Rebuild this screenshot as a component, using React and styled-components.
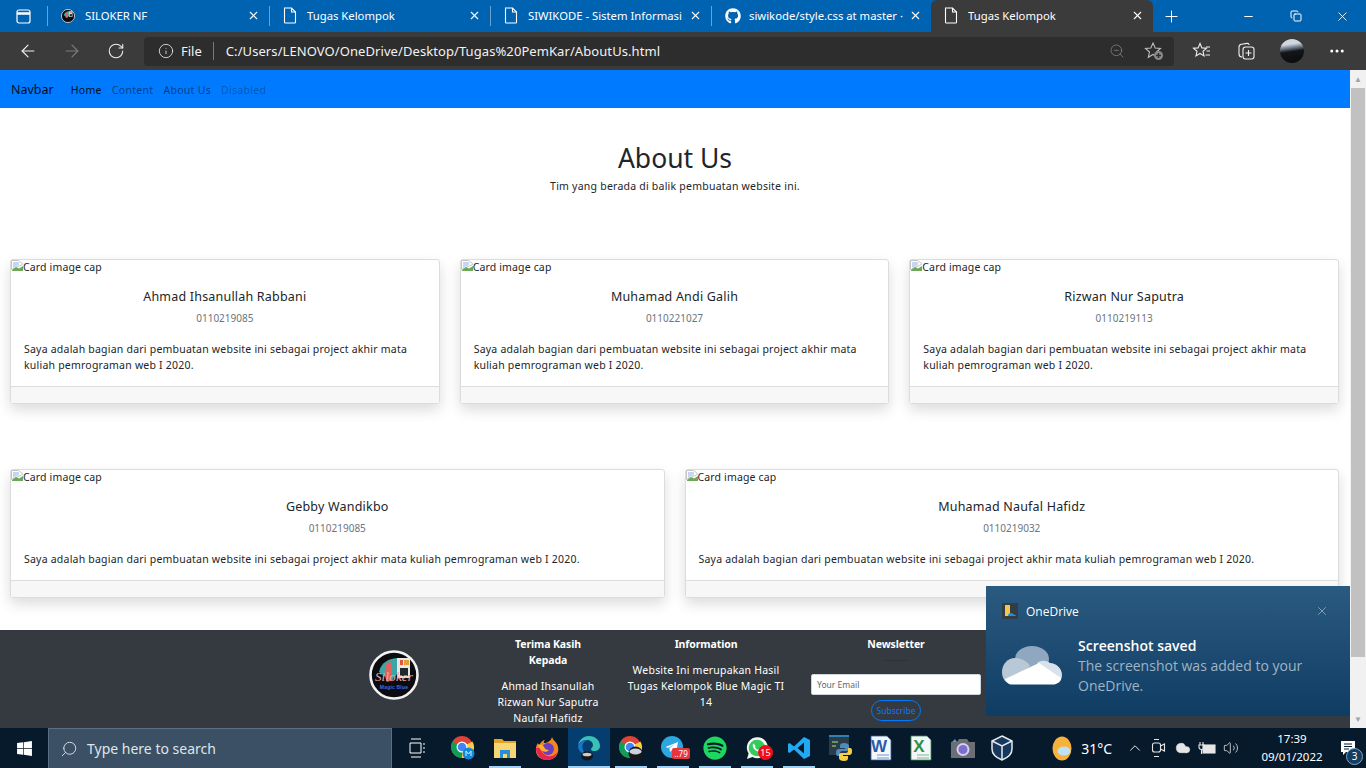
import React from "react";
import styled, { createGlobalStyle } from "styled-components";
import {
  ArrowLeft,
  ArrowRight,
  RotateCw,
  Info,
  ZoomOut,
  Plus,
  Minus,
  X,
  Copy,
  MoreHorizontal,
  Search,
  ChevronUp,
  Volume2,
  Cloud,
} from "lucide-react";
import { FaGithub, FaWindows, FaSpotify } from "react-icons/fa";

const GlobalStyle = createGlobalStyle`
  html, body { margin: 0; padding: 0; height: 100%; overflow: hidden; }
  body { font-family: "Noto Sans", "Open Sans", sans-serif; }
  * { box-sizing: border-box; }
`;

const Screen = styled.div`
  width: 1366px;
  height: 768px;
  display: flex;
  flex-direction: column;
  position: relative;
  overflow: hidden;
  background: #fff;
`;

/* browser chrome */
const TabStrip = styled.div`
  height: 32px;
  background: #0063b1;
  display: flex;
  align-items: stretch;
  color: #fff;
`;
const StripButton = styled.div`
  width: 47px;
  display: flex;
  align-items: center;
  justify-content: center;
`;
const Tab = styled.div`
  width: ${(p) => p.$w}px;
  display: flex;
  align-items: center;
  padding: 0 9px 1px 13px;
  gap: 10px;
  font-size: 11.3px;
  background: ${(p) => (p.$active ? "#3b3b3b" : "transparent")};
  border-radius: ${(p) => (p.$active ? "6px 6px 0 0" : "0")};
  border-left: ${(p) => (p.$active ? "none" : "1px solid #6aa3d2")};
  margin: ${(p) => (p.$active ? "0" : "6px 0")};
`;
const TabTitle = styled.span`
  flex: 1;
  white-space: nowrap;
  overflow: hidden;
`;
const TabClose = styled.span`
  display: flex;
  margin-left: -6px;
`;
const GithubMark = styled(FaGithub)`
  margin-right: -2px;
`;
const NewTab = styled.div`
  width: 36px;
  display: flex;
  align-items: center;
  justify-content: center;
`;
const WindowButtons = styled.div`
  margin-left: auto;
  display: flex;
`;
const WindowButton = styled.div`
  width: 47px;
  display: flex;
  align-items: center;
  justify-content: center;
`;
const Toolbar = styled.div`
  height: 38px;
  background: #3b3b3b;
  display: flex;
  align-items: center;
  padding-left: 6px;
  color: #fff;
`;
const NavButton = styled.div`
  width: 44px;
  display: flex;
  justify-content: center;
  color: ${(p) => (p.$off ? "#7c7c7c" : "#f0f0f0")};
`;
const AddressBar = styled.div`
  width: 1030px;
  height: 29px;
  margin-left: 6px;
  background: #2d2d2d;
  border-radius: 4px;
  display: flex;
  align-items: center;
  padding: 0 10px 0 14px;
  font-size: 13px;
  color: #f2f2f2;
`;
const FileLabel = styled.span`
  margin-left: 7px;
  padding-right: 11px;
  border-right: 1px solid #7a7a7a;
  line-height: 18px;
`;
const Url = styled.span`
  margin-left: 12px;
  flex: 1;
  white-space: nowrap;
  letter-spacing: 0.08px;
`;
const ToolIcons = styled.div`
  display: flex;
  align-items: center;
  margin-left: ${(p) => p.$left}px;
  gap: 24px;
`;
const Avatar = styled.div`
  width: 24px;
  height: 24px;
  border-radius: 50%;
  background: linear-gradient(172deg, #cfd6de 0 24%, #7b8794 36%, #14161b 52%, #0a0a0c 100%);
`;

/* page */
const Viewport = styled.div`
  flex: 1;
  min-height: 0;
  display: flex;
`;
const Page = styled.div`
  flex: 1;
  min-width: 0;
  overflow: hidden;
  color: #212529;
`;
const Scrollbar = styled.div`
  width: 16px;
  background: #f1f1f1;
  display: flex;
  flex-direction: column;
  align-items: center;
  color: #a3a3a3;
  font-size: 8px;
`;
const ScrollArrow = styled.div`
  height: 18px;
  line-height: 18px;
`;
const ScrollThumb = styled.div`
  width: 14px;
  height: 569px;
  background: #c1c1c1;
`;
const ScrollSpace = styled.div`
  flex: 1;
`;
const Navbar = styled.nav`
  height: 38px;
  background: #007bff;
  display: flex;
  align-items: center;
  padding: 1px 11px 0;
`;
const Brand = styled.span`
  font-size: 12.5px;
  color: rgba(0, 0, 0, 0.9);
  margin-right: 17px;
`;
const NavLink = styled.span`
  font-size: 10.5px;
  letter-spacing: 0.3px;
  margin-right: 10px;
  color: ${(p) => (p.$active ? "rgba(0,0,0,.9)" : p.$disabled ? "rgba(0,0,0,.3)" : "rgba(0,0,0,.5)")};
`;
const Hero = styled.header`
  text-align: center;
  padding-top: 32px;
  height: 151px;
`;
const HeroTitle = styled.h1`
  margin: 0;
  font-size: 26.5px;
  font-weight: 400;
  line-height: 37px;
  color: #212529;
`;
const HeroText = styled.p`
  margin: -1px 0 0;
  font-size: 10.5px;
  letter-spacing: 0.23px;
  line-height: 20px;
`;
const CardRow = styled.section`
  display: grid;
  grid-template-columns: repeat(${(p) => p.$cols}, 1fr);
  gap: 20px;
  padding: 0 11px 0 10px;
  margin-bottom: 65px;
`;
const Card = styled.article`
  background: #fff;
  border: 1px solid #dcdcdc;
  border-radius: 3px;
  box-shadow: 0 6px 14px rgba(0, 0, 0, 0.14);
  display: flex;
  flex-direction: column;
  min-width: 0;
`;
const BrokenImage = styled.div`
  display: flex;
  align-items: flex-start;
  height: 16px;
  font-size: 10.5px;
  letter-spacing: 0.15px;
  line-height: 15px;
`;
const CardBody = styled.div`
  padding: 12px 13px 13px;
  font-size: 10.5px;
  letter-spacing: 0.22px;
`;
const CardName = styled.h5`
  margin: 0;
  text-align: center;
  font-size: 12.5px;
  font-weight: 400;
  line-height: 18px;
  letter-spacing: 0.2px;
`;
const CardId = styled.div`
  text-align: center;
  color: #6c757d;
  font-size: 10px;
  letter-spacing: 0;
  line-height: 16px;
  margin-top: 4px;
`;
const CardText = styled.p`
  margin: 15px 0 0;
  line-height: 16px;
`;
const CardFooter = styled.div`
  height: 17px;
  background: #f7f7f7;
  border-top: 1px solid #dcdcdc;
  margin-top: auto;
`;
const Footer = styled.footer`
  margin-top: -33px;
  min-height: 120px;
  background: #343a40;
  padding: 6px 0 0 315px;
  display: grid;
  grid-template-columns: 158px 150px 166px 214px;
  color: #fff;
  font-size: 10.5px;
  letter-spacing: 0.2px;
  line-height: 16px;
  text-align: center;
`;
const FooterCol = styled.div`
  padding: 0 ${(p) => p.$pad || 0}px;
`;
const LogoCol = styled.div`
  display: flex;
  justify-content: center;
  padding-top: 14px;
  height: 70px;
`;
const FooterTitle = styled.h6`
  margin: 0 0 ${(p) => p.$gap}px;
  font-size: 10.5px;
  font-weight: 700;
  letter-spacing: -0.1px;
  line-height: 16px;
`;
const FooterRule = styled.div`
  width: 22px;
  height: 1px;
  background: #2b3035;
  margin: 0 auto 13px;
`;
const EmailInput = styled.div`
  width: 170px;
  height: 21px;
  margin: 0 auto 5px;
  background: #fff;
  border: 1px solid #ced4da;
  border-radius: 2px;
  color: #5f666d;
  font-size: 8.5px;
  letter-spacing: 0;
  line-height: 19px;
  text-align: left;
  padding-left: 5px;
`;
const SubscribeButton = styled.div`
  width: 50px;
  height: 21px;
  margin: 0 auto;
  border: 1px solid #007bff;
  border-radius: 11px;
  color: #007bff;
  font-size: 8.5px;
  letter-spacing: 0;
  line-height: 19px;
`;

/* onedrive toast */
const Toast = styled.div`
  position: absolute;
  left: 986px;
  top: 586px;
  width: 364px;
  height: 130px;
  background: linear-gradient(180deg, #2b5a80 0%, #0f3c62 100%);
  color: #fff;
  padding: 16px 20px 0 16px;
  font-family: "Open Sans", "Noto Sans", sans-serif;
`;
const ToastHead = styled.div`
  display: flex;
  align-items: center;
  gap: 8px;
  font-size: 12px;
  height: 18px;
`;
const ToastApp = styled.div`
  width: 16px;
  height: 16px;
  background: #333d45;
  display: flex;
  align-items: center;
  justify-content: center;
`;
const ToastClose = styled.div`
  margin-left: auto;
  margin-right: 1px;
  color: #a9bccb;
  display: flex;
`;
const ToastBody = styled.div`
  display: flex;
  margin-top: 16px;
  gap: 16px;
`;
const ToastCloud = styled.div`
  flex: none;
  padding-top: 10px;
`;
const ToastTitle = styled.div`
  font-size: 14px;
  font-weight: 600;
  line-height: 20px;
`;
const ToastText = styled.div`
  font-size: 14px;
  line-height: 20px;
  color: #9fb4c6;
  width: 264px;
`;

/* taskbar */
const Taskbar = styled.div`
  height: 40px;
  background: #071a2b;
  display: flex;
  align-items: stretch;
  color: #fff;
`;
const StartButton = styled.div`
  width: 48px;
  display: flex;
  align-items: center;
  justify-content: center;
`;
const SearchBox = styled.div`
  width: 344px;
  background: #3b5064;
  border: 1px solid #5b6f80;
  border-bottom: none;
  display: flex;
  align-items: center;
  padding-left: 11px;
  gap: 9px;
  font-size: 14px;
  color: #dfe5ea;
`;
const SearchGlass = styled(Search)`
  transform: scaleX(-1);
`;
const TaskApps = styled.div`
  display: flex;
  margin-left: 4px;
`;
const TaskApp = styled.div`
  width: ${(p) => p.$w || 42}px;
  padding-right: ${(p) => p.$pr || 0}px;
  position: relative;
  display: flex;
  align-items: center;
  justify-content: center;
  background: ${(p) => (p.$active ? "#053e6e" : "transparent")};

  &::after {
    content: "";
    display: ${(p) => (p.$running ? "block" : "none")};
    position: absolute;
    bottom: 0;
    left: ${(p) => (p.$active ? 0 : 5)}px;
    right: ${(p) => (p.$active ? 0 : 5)}px;
    height: 2px;
    background: #9fd0f2;
  }
`;
const RoundBadge = styled.span`
  position: absolute;
  right: 5px;
  top: 17px;
  width: 15px;
  height: 15px;
  border-radius: 50%;
  background: #f00f16;
  color: #fff;
  font-size: 9px;
  line-height: 15px;
  text-align: center;
`;
const SquareBadge = styled.span`
  position: absolute;
  right: 4px;
  top: 20px;
  width: 18px;
  height: 11px;
  border-radius: 2px;
  background: #e8343a;
  color: #fff;
  font-size: 8px;
  line-height: 11px;
  text-align: center;
`;
const Tray = styled.div`
  margin-left: auto;
  display: flex;
  align-items: center;
  font-size: 14px;
`;
const Weather = styled.div`
  display: flex;
  align-items: center;
  gap: 9px;
  margin-right: 11px;
`;
const TrayIcon = styled.div`
  width: 24px;
  display: flex;
  justify-content: center;
  color: #e6e6e6;
`;
const Clock = styled.div`
  width: 76px;
  margin-left: 11px;
  text-align: center;
  font-size: 11.5px;
  line-height: 18px;
`;
const Notify = styled.div`
  width: 36px;
  position: relative;
  display: flex;
  justify-content: center;
`;
const NotifyBadge = styled.span`
  position: absolute;
  right: 3px;
  top: 8px;
  width: 17px;
  height: 17px;
  border-radius: 50%;
  background: #123e63;
  border: 1px solid #7fa6c4;
  font-size: 10px;
  line-height: 15px;
  text-align: center;
`;

const FileIcon = () => (
  <svg width="14" height="17" viewBox="0 0 14 17" fill="none" stroke="#fff" strokeWidth="1.1">
    <path d="M1.5 1h7l4 4v10.2a.8.8 0 0 1-.8.8H2.3a.8.8 0 0 1-.8-.8z" />
    <path d="M8.5 1v4h4" />
  </svg>
);
const TabsIcon = () => (
  <svg width="15" height="15" viewBox="0 0 15 15" fill="none" stroke="#fff" strokeWidth="1.2">
    <rect x="1" y="1" width="13" height="13" rx="2" />
    <path d="M1 4.5h13" strokeWidth="2.5" />
  </svg>
);
const SilokerIcon = ({ size = 14 }) => (
  <svg width={size} height={size} viewBox="0 0 50 50">
    <circle cx="25" cy="25" r="23.5" fill="#0c0c10" stroke="#f2f2f2" strokeWidth="2.6" />
    <path d="M10 22c2-9 9-14 20-14v14l-7 8-5-2z" fill="#3aa6a8" />
    <path d="M28 8h13v20H28z" fill="#e8e8e4" />
    <path d="M31 10h3v5h-3z" fill="#e2553f" />
    <path d="M35 10h5v5h-5z" fill="#e0a23c" />
    <path d="M31 18h8v8h-8z" fill="#23282e" />
    <path d="M18 13c4-2 6 1 5 5s-2 8 1 12l-6 2c-3-6-3-13 0-19z" fill="#e2635a" />
    {size > 20 && (
      <text x="25" y="31" fontSize="13" fontStyle="italic" textAnchor="middle" fill="#f4a79c" fontFamily="Liberation Serif, serif">Siloker</text>
    )}
    {size > 20 && (
      <text x="25" y="39" fontSize="5" fontWeight="700" textAnchor="middle" fill="#3f6be0" fontFamily="Liberation Sans, sans-serif">Magic Blue</text>
    )}
  </svg>
);
const StarAddIcon = () => (
  <svg width="20" height="20" viewBox="0 0 20 20" fill="none" stroke="#bdbdbd" strokeWidth="1.1">
    <path d="M9 2l2.2 5 5.3.5-4 3.5 1.2 5.3L9 13.5l-4.7 2.8L5.5 11l-4-3.5L6.8 7z" />
    <circle cx="14.5" cy="14.5" r="4.5" fill="#8a8a8a" stroke="none" />
    <path d="M14.5 12v5M12 14.5h5" stroke="#2d2d2d" strokeWidth="1.4" />
  </svg>
);
const FavoritesIcon = () => (
  <svg width="20" height="20" viewBox="0 0 20 20" fill="none" stroke="#f0f0f0" strokeWidth="1.1">
    <path d="M8 2.5l1.9 4.4 4.6.4-3.5 3 1 4.6L8 12.5l-4 2.4 1-4.6-3.5-3 4.6-.4z" />
    <path d="M14 6h4M14.5 10H18M13.5 14H18" />
  </svg>
);
const CollectionsIcon = () => (
  <svg width="20" height="20" viewBox="0 0 20 20" fill="none" stroke="#f0f0f0" strokeWidth="1.1">
    <path d="M6 16c-2 0-3-1-3-3V6c0-1.6 1-2.6 2.5-2.8L11 2.4c1.2-.1 2 .5 2.2 1.6" />
    <rect x="7" y="6" width="11" height="12" rx="2.5" />
    <path d="M12.500 9v6M9.500 12h6" />
  </svg>
);
const BrokenGlyph = () => (
  <svg width="12" height="11" viewBox="0 0 12 11">
    <path d="M0.500 0.500h7l4 3v1l-11 5z" fill="#fff" stroke="#c4c4c4" />
    <path d="M2 2h6v3l-6 3z" fill="#c5d6f3" />
    <path d="M1 10l4-3 3 1.500L12 6v5H1z" fill="#6da85a" />
  </svg>
);
const ChromeIcon = ({ badge }) => (
  <svg width="24" height="26" viewBox="0 0 24 26">
    <circle cx="11" cy="12" r="11" fill="#db4437" />
    <path d="M11 12L1.500 6.500A11 11 0 0 0 11 23z" fill="#0f9d58" />
    <path d="M11 12V23A11 11 0 0 0 21.500 6.500z" fill="#ffcd40" />
    <circle cx="11" cy="12" r="5.500" fill="#fff" />
    <circle cx="11" cy="12" r="4.300" fill="#4285f4" />
    {badge === "m" && <circle cx="17.500" cy="18.500" r="6" fill="#1488d8" />}
    {badge === "m" && <path d="M15 21v-5l2.500 3 2.500-3v5" fill="none" stroke="#d6ecfb" strokeWidth="1" />}
    {badge === "b" && <circle cx="16.500" cy="18.500" r="7" fill="#17181c" />}
    {badge === "b" && <ellipse cx="16.500" cy="16.500" rx="6" ry="3" fill="#cdd3d8" />}
  </svg>
);
const ExplorerIcon = () => (
  <svg width="22" height="20" viewBox="0 0 22 20">
    <path d="M0 1h8l2 2h12v3H0z" fill="#e0a526" />
    <path d="M0 5h22v15H0z" fill="#f7d774" />
    <path d="M6 12h10v8h-3v-4h-4v4H6z" fill="#2a8ed6" />
  </svg>
);
const FirefoxIcon = () => (
  <svg width="24" height="25" viewBox="0 0 24 25">
    <path d="M17 1c1 3 3 4 5 7 3 6 1 16-10 16C5 24 0 19 1 12c.3-2.500 1.500-4.500 2-5 .2 1 .8 1.800 1.500 2C5.500 6 8 4 10 4c-1 1-1.500 2-1 3 3 0 7-2 8-6z" fill="#f6851f" />
    <path d="M1 12c0 7 5 12 11 12 6 0 10-4 11-9-2 4-6 6-10 5-4-.6-7-4-7-8z" fill="#e5264e" />
    <circle cx="13" cy="13" r="6" fill="#6a3fc4" />
    <path d="M3 9c3-1 5 0 6 2s2 3 5 3c-2 3-7 2-9-1z" fill="#ffb02e" />
  </svg>
);
const EdgeIcon = () => (
  <svg width="24" height="26" viewBox="0 0 24 26">
    <path d="M12 1c6.500 0 11 4.500 11 10 0 3-2.400 5-5.600 5-2.400 0-3.500-1-3.500-1.800 0-1 2-1.400 2-4.200 0-3-2.800-5-6-5C5.500 5 2 7.500 1 11 1.500 5.500 6 1 12 1z" fill="#37c2b5" />
    <path d="M1 11c1-3.500 4.500-6 8.900-6-3 1.500-4.900 4.500-4.400 8 .3 2.500 1.700 4.500 3.500 6-5-.5-8-3.700-8-8z" fill="#1a73c8" />
    <ellipse cx="10" cy="21" rx="6" ry="4.500" fill="#15171b" />
    <ellipse cx="10" cy="19.500" rx="4.500" ry="1.800" fill="#c7cdd3" />
  </svg>
);
const TelegramIcon = () => (
  <svg width="24" height="24" viewBox="0 0 24 24">
    <circle cx="11" cy="11" r="11" fill="#2ea6e0" />
    <path d="M4.500 11L17 6l-2 11-4-3-2 2-.6-4L14 8l-7 4z" fill="#fff" />
  </svg>
);
const WhatsappIcon = () => (
  <svg width="24" height="25" viewBox="0 0 24 25">
    <path d="M2 23l1.600-5.500A10.500 10.500 0 1 1 7.500 21z" fill="#f4f6f4" />
    <circle cx="12" cy="12" r="8.300" fill="#31cc5c" />
    <path d="M8.500 7.500c-1.500 1.500-.8 4 1.200 6s4.500 3 6 1.500l-2-2-1.200.8c-1-.5-2-1.600-2.600-2.700l.8-1.200z" fill="#fff" />
  </svg>
);
const VsCodeIcon = () => (
  <svg width="24" height="24" viewBox="0 0 24 24">
    <path d="M17 1l6 3v16l-6 3L7 13.500 2.500 17 1 16v-8l1.500-1L7 10.500z" fill="#23a9f2" />
    <path d="M17 6.500L10.500 12l6.500 5.500z" fill="#071a2b" />
  </svg>
);
const PythonIcon = () => (
  <svg width="24" height="26" viewBox="0 0 24 26">
    <rect x="0" y="0" width="20" height="20" fill="#2b3b47" />
    <path d="M0 0h20v2H0z" fill="#2f81b7" />
    <path d="M3 7h6M3 11h4" stroke="#7cb36b" strokeWidth="1.500" />
    <path d="M15 8c-3 0-4 1-4 3v2h5v1h-6c-2 0-3 1-3 4s1 3 3 3h1v-3c0-1.500 1-2 3-2h4c1.500 0 2-1 2-2v-3c0-2-2-3-5-3z" fill="#4c8cbf" />
    <path d="M15 26c3 0 4-1 4-3v-2h-5v-1h6c2 0 3-1 3-4s-1-3-3-3h-1v3c0 1.500-1 2-3 2h-4c-1.500 0-2 1-2 2v3c0 2 2 3 5 3z" fill="#f5cf46" />
  </svg>
);
const OfficeIcon = ({ color, letter }) => (
  <svg width="24" height="26" viewBox="0 0 24 26">
    <path d="M2 1h16l4 4v20H2z" fill="#f4f6f8" stroke={color} strokeWidth=".8" />
    <text x="10" y="17" fontSize="17" fontWeight="700" textAnchor="middle" fill={color} fontFamily="Liberation Sans, sans-serif">{letter}</text>
    <path d="M8 20h12M8 23h12" stroke={color} strokeWidth="1" opacity=".6" />
  </svg>
);
const CameraIcon = () => (
  <svg width="24" height="20" viewBox="0 0 24 20">
    <path d="M0 4h6l2-3h8l2 3h6v16H0z" fill="#6b6f75" />
    <circle cx="12" cy="11.500" r="6.500" fill="#d6d0ee" />
    <circle cx="12" cy="11.500" r="4.500" fill="#7a6fd0" />
    <path d="M1 4l3-3 2 3z" fill="#3da0e6" />
  </svg>
);
const VBoxIcon = () => (
  <svg width="22" height="26" viewBox="0 0 22 26" fill="#17375c" stroke="#e3e9f0" strokeWidth="1.500">
    <path d="M11 1L21 6v8c0 5-5 9-10 11C6 23 1 19 1 14V6z" />
    <path d="M1 6l10 5 10-5M11 11v14" fill="none" />
  </svg>
);
const WeatherIcon = () => (
  <svg width="20" height="25" viewBox="0 0 20 25">
    <ellipse cx="10" cy="12.500" rx="9.500" ry="12" fill="#f6b23a" />
    <ellipse cx="12" cy="15" rx="6.500" ry="4.500" fill="#bfe0f5" />
  </svg>
);
const MeetIcon = () => (
  <svg width="16" height="22" viewBox="0 0 16 22" fill="none" stroke="#e6e6e6" strokeWidth="1.100">
    <rect x="1.500" y="6" width="8" height="9" rx="2" />
    <path d="M9.500 9l4-2v7l-4-2M3 2.500h5M3 19.500h5" />
  </svg>
);
const PowerIcon = () => (
  <svg width="18" height="16" viewBox="0 0 18 16" fill="none" stroke="#e6e6e6" strokeWidth="1.100">
    <rect x="5" y="5" width="12" height="8" fill="#e6e6e6" />
    <path d="M2 2v3M5 2v3M1 5h5v2a2.500 2.500 0 0 1-5 0zM3.500 10v4" />
  </svg>
);
const ActionIcon = () => (
  <svg width="16" height="16" viewBox="0 0 16 16">
    <path d="M1 1h14v11H6l-3 3v-3H1z" fill="#fff" />
    <path d="M4 4h8M4 6.500h8M4 9h5" stroke="#071a2b" />
  </svg>
);
const TaskViewIcon = () => (
  <svg width="16" height="20" viewBox="0 0 16 20" fill="none" stroke="#fff">
    <path d="M2 1h10M2 19h10M1 5h11v10H1zM15 5v2M15 9v2M15 13v2" />
  </svg>
);
const OneDriveTile = () => (
  <svg width="12" height="13" viewBox="0 0 12 13">
    <path d="M1 0h5v11H1z" fill="#f2c74e" />
    <path d="M4 11c0-2.500 2-3 3-3 1.500 0 2 1 2.500 1.500 1 0 2.500.5 2.500 1.500z" fill="#1c8fe0" />
  </svg>
);
const OneDriveCloud = () => (
  <svg width="60" height="39" viewBox="0 0 60 39">
    <ellipse cx="30" cy="13" rx="17" ry="13" fill="#8fa8bf" />
    <path d="M0 26c0-8 6-14 13-14 6 0 12 3 15 8L10 38C4 38 0 33 0 26z" fill="#b8c8d6" />
    <path d="M35 17c4-3 9-3 13 0 6 0 12 5 12 12 0 4-2 7-4 8z" fill="#d9e2ea" />
    <path d="M3 33l34-16 22 15c-1 4-4 6.500-8 6.500H10c-3 0-6-2-7-5.500z" fill="#fff" />
  </svg>
);

function Member({ name, id }) {
  return (
    <Card>
      <BrokenImage>
        <BrokenGlyph />
        Card image cap
      </BrokenImage>
      <CardBody>
        <CardName>{name}</CardName>
        <CardId>{id}</CardId>
        <CardText>
          Saya adalah bagian dari pembuatan website ini sebagai project akhir mata kuliah pemrograman web I 2020.
        </CardText>
      </CardBody>
      <CardFooter />
    </Card>
  );
}

function BrowserTab({ w, active, icon, title }) {
  return (
    <Tab $w={w} $active={active}>
      {icon}
      <TabTitle>{title}</TabTitle>
      <TabClose><X size={13} /></TabClose>
    </Tab>
  );
}

export default function App() {
  return (
    <Screen>
      <GlobalStyle />
      <TabStrip>
        <StripButton><TabsIcon /></StripButton>
        <BrowserTab w={222} icon={<SilokerIcon />} title="SILOKER NF" />
        <BrowserTab w={221} icon={<FileIcon />} title="Tugas Kelompok" />
        <BrowserTab w={221} icon={<FileIcon />} title="SIWIKODE - Sistem Informasi" />
        <BrowserTab w={220} icon={<GithubMark size={16} />} title="siwikode/style.css at master ·" />
        <BrowserTab w={222} active icon={<FileIcon />} title="Tugas Kelompok" />
        <NewTab><Plus size={19} strokeWidth={1.3} /></NewTab>
        <WindowButtons>
          <WindowButton><Minus size={13} /></WindowButton>
          <WindowButton><Copy size={12} /></WindowButton>
          <WindowButton><X size={15} strokeWidth={1.4} /></WindowButton>
        </WindowButtons>
      </TabStrip>
      <Toolbar>
        <NavButton><ArrowLeft size={20} strokeWidth={1.4} /></NavButton>
        <NavButton $off><ArrowRight size={20} strokeWidth={1.4} /></NavButton>
        <NavButton><RotateCw size={18} strokeWidth={1.4} /></NavButton>
        <AddressBar>
          <Info size={16} strokeWidth={1.2} />
          <FileLabel>File</FileLabel>
          <Url>C:/Users/LENOVO/OneDrive/Desktop/Tugas%20PemKar/AboutUs.html</Url>
          <ZoomOut size={16} strokeWidth={1.1} color="#8b8b8b" />
          <ToolIcons $left={19}>
            <StarAddIcon />
          </ToolIcons>
        </AddressBar>
        <ToolIcons $left={18}>
          <FavoritesIcon />
          <CollectionsIcon />
          <Avatar />
          <MoreHorizontal size={18} />
        </ToolIcons>
      </Toolbar>
      <Viewport>
        <Page>
          <Navbar>
            <Brand>Navbar</Brand>
            <NavLink $active>Home</NavLink>
            <NavLink>Content</NavLink>
            <NavLink>About Us</NavLink>
            <NavLink $disabled>Disabled</NavLink>
          </Navbar>
          <Hero>
            <HeroTitle>About Us</HeroTitle>
            <HeroText>Tim yang berada di balik pembuatan website ini.</HeroText>
          </Hero>
          <CardRow $cols={3}>
            <Member name="Ahmad Ihsanullah Rabbani" id="0110219085" />
            <Member name="Muhamad Andi Galih" id="0110221027" />
            <Member name="Rizwan Nur Saputra" id="0110219113" />
          </CardRow>
          <CardRow $cols={2}>
            <Member name="Gebby Wandikbo" id="0110219085" />
            <Member name="Muhamad Naufal Hafidz" id="0110219032" />
          </CardRow>
          <Footer>
            <LogoCol><SilokerIcon size={50} /></LogoCol>
            <FooterCol $pad={22}>
              <FooterTitle $gap={10}>Terima Kasih Kepada</FooterTitle>
              Ahmad Ihsanullah<br />Rizwan Nur Saputra<br />Naufal Hafidz
            </FooterCol>
            <FooterCol $pad={2}>
              <FooterTitle $gap={10}>Information</FooterTitle>
              Website Ini merupakan Hasil Tugas Kelompok Blue Magic TI 14
            </FooterCol>
            <FooterCol>
              <FooterTitle $gap={8}>Newsletter</FooterTitle>
              <FooterRule />
              <EmailInput>Your Email</EmailInput>
              <SubscribeButton>Subscribe</SubscribeButton>
            </FooterCol>
          </Footer>
        </Page>
        <Scrollbar>
          <ScrollArrow>▲</ScrollArrow>
          <ScrollThumb />
          <ScrollSpace />
          <ScrollArrow>▼</ScrollArrow>
        </Scrollbar>
      </Viewport>
      <Toast>
        <ToastHead>
          <ToastApp><OneDriveTile /></ToastApp>
          OneDrive
          <ToastClose><X size={14} strokeWidth={1.2} /></ToastClose>
        </ToastHead>
        <ToastBody>
          <ToastCloud><OneDriveCloud /></ToastCloud>
          <div>
            <ToastTitle>Screenshot saved</ToastTitle>
            <ToastText>The screenshot was added to your OneDrive.</ToastText>
          </div>
        </ToastBody>
      </Toast>
      <Taskbar>
        <StartButton><FaWindows size={17} /></StartButton>
        <SearchBox>
          <SearchGlass size={18} strokeWidth={1.2} />
          Type here to search
        </SearchBox>
        <TaskApps>
          <TaskApp $w={46} $pr={4}><TaskViewIcon /></TaskApp>
          <TaskApp><ChromeIcon badge="m" /></TaskApp>
          <TaskApp $running><ExplorerIcon /></TaskApp>
          <TaskApp><FirefoxIcon /></TaskApp>
          <TaskApp $running $active><EdgeIcon /></TaskApp>
          <TaskApp $running><ChromeIcon badge="b" /></TaskApp>
          <TaskApp $running>
            <TelegramIcon />
            <SquareBadge>..79</SquareBadge>
          </TaskApp>
          <TaskApp $running><FaSpotify size={24} color="#1ed760" /></TaskApp>
          <TaskApp $running>
            <WhatsappIcon />
            <RoundBadge>15</RoundBadge>
          </TaskApp>
          <TaskApp $running><VsCodeIcon /></TaskApp>
          <TaskApp><PythonIcon /></TaskApp>
          <TaskApp $w={38}><OfficeIcon color="#2a5cae" letter="W" /></TaskApp>
          <TaskApp><OfficeIcon color="#2f8f4e" letter="X" /></TaskApp>
          <TaskApp><CameraIcon /></TaskApp>
          <TaskApp $w={36}><VBoxIcon /></TaskApp>
        </TaskApps>
        <Tray>
          <Weather>
            <WeatherIcon />
            31°C
          </Weather>
          <TrayIcon><ChevronUp size={18} strokeWidth={1.3} /></TrayIcon>
          <TrayIcon><MeetIcon /></TrayIcon>
          <TrayIcon><Cloud size={16} fill="#e6e6e6" strokeWidth={1} /></TrayIcon>
          <TrayIcon><PowerIcon /></TrayIcon>
          <TrayIcon><Volume2 size={16} strokeWidth={1.2} /></TrayIcon>
          <Clock>17:39<br />09/01/2022</Clock>
          <Notify>
            <ActionIcon />
            <NotifyBadge>3</NotifyBadge>
          </Notify>
        </Tray>
      </Taskbar>
    </Screen>
  );
}
